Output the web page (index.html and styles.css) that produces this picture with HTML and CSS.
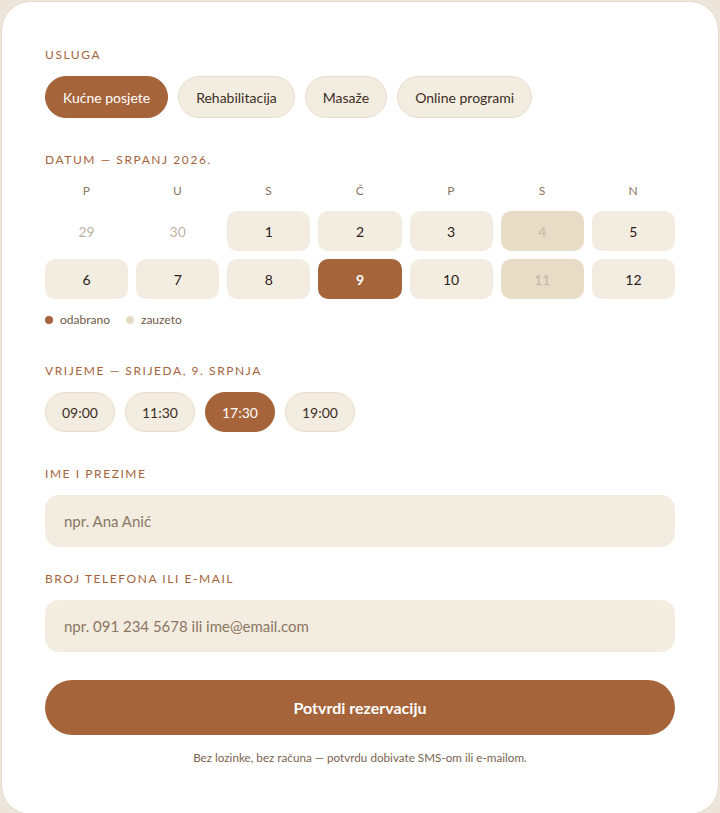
FILE: index.html
```html
<!DOCTYPE html>
<html lang="hr">
<head>
    <meta charset="UTF-8">
    <meta name="viewport" content="width=device-width, initial-scale=1.0">
    <title>Rezervacija termina</title>
    <link rel="stylesheet" href="styles.css">
</head>
<body>
    <div class="card">
        <div class="section">
            <p class="label">Usluga</p>
            <div class="chips">
                <button class="chip active">Kućne posjete</button>
                <button class="chip">Rehabilitacija</button>
                <button class="chip">Masaže</button>
                <button class="chip">Online programi</button>
            </div>
        </div>

        <div class="section">
            <p class="label">Datum — srpanj 2026.</p>
            <div class="weekdays">
                <span>P</span><span>U</span><span>S</span><span>Č</span><span>P</span><span>S</span><span>N</span>
            </div>
            <div class="calendar">
                <span class="day muted">29</span>
                <span class="day muted">30</span>
                <button class="day">1</button>
                <button class="day">2</button>
                <button class="day">3</button>
                <button class="day taken">4</button>
                <button class="day">5</button>
                <button class="day">6</button>
                <button class="day">7</button>
                <button class="day">8</button>
                <button class="day selected">9</button>
                <button class="day">10</button>
                <button class="day taken">11</button>
                <button class="day">12</button>
            </div>
            <div class="legend">
                <span><i class="dot dot-selected"></i>odabrano</span>
                <span><i class="dot dot-taken"></i>zauzeto</span>
            </div>
        </div>

        <div class="section times">
            <p class="label">Vrijeme — srijeda, 9. srpnja</p>
            <div class="chips">
                <button class="chip time">09:00</button>
                <button class="chip time">11:30</button>
                <button class="chip time active">17:30</button>
                <button class="chip time">19:00</button>
            </div>
        </div>

        <div class="section">
            <p class="label">Ime i prezime</p>
            <input type="text" class="field" placeholder="npr. Ana Anić">
        </div>

        <div class="section tight">
            <p class="label">Broj telefona ili e-mail</p>
            <input type="text" class="field" placeholder="npr. 091 234 5678 ili ime@email.com">
        </div>

        <button class="submit">Potvrdi rezervaciju</button>
        <p class="note">Bez lozinke, bez računa — potvrdu dobivate SMS-om ili e-mailom.</p>
    </div>
</body>
</html>
```

FILE: styles.css
```css
* {
    box-sizing: border-box;
}
body {
    margin: 0;
    padding: 1px;
    background-color: #ede5d8;
    font-family: Lato, "Open Sans", sans-serif;
    color: #2b2118;
}
.card {
    background-color: #fff;
    border: 1px solid #e6dccb;
    border-radius: 30px;
    padding: 46px 43px 50px;
    min-height: 811px;
}
.label {
    margin: 0 0 14px;
    font-size: 12px;
    line-height: 14px;
    letter-spacing: 0.13em;
    text-transform: uppercase;
    color: #a5633b;
}
.section + .section {
    margin-top: 35px;
}
.section.times {
    margin-top: 37px;
}
.section.tight {
    margin-top: 25px;
}
.chips {
    display: flex;
    gap: 10px;
}
button {
    font-family: inherit;
    cursor: pointer;
}
.chip {
    height: 42px;
    padding: 0 17px;
    font-size: 14px;
    color: #3d2f24;
    background-color: #f3ece1;
    border: 1px solid #e8dece;
    border-radius: 999px;
}
.chip.time {
    height: 40px;
    padding: 0 16px;
}
.chip.active {
    background-color: #a6643a;
    border-color: #a6643a;
    color: #fff;
}
.weekdays {
    display: grid;
    grid-template-columns: repeat(7, 1fr);
    gap: 8px;
    margin-top: 3px;
    font-size: 12px;
    line-height: 20px;
    letter-spacing: 0.05em;
    color: #8b7661;
    text-align: center;
}
.calendar {
    display: grid;
    grid-template-columns: repeat(7, 1fr);
    gap: 8px;
    margin-top: 10px;
}
.day {
    height: 40px;
    display: flex;
    align-items: center;
    justify-content: center;
    font-size: 14px;
    color: #2b2118;
    background-color: #f3ece1;
    border: none;
    border-radius: 10px;
}
.day.muted {
    background: none;
    color: #bdb2a3;
}
.day.taken {
    background-color: #e9dcc7;
    color: #c3b7a6;
}
.day.selected {
    background-color: #a6643a;
    color: #fff;
    font-weight: 700;
}
.legend {
    display: flex;
    gap: 16px;
    margin-top: 14px;
    font-size: 12px;
    line-height: 14px;
    color: #6f5a48;
}
.legend span {
    display: flex;
    align-items: center;
    gap: 7px;
}
.dot {
    width: 8px;
    height: 8px;
    border-radius: 50%;
}
.dot-selected {
    background-color: #a6643a;
}
.dot-taken {
    background-color: #e6dcc6;
}
.field {
    display: block;
    width: 100%;
    height: 52px;
    padding: 0 19px;
    font-family: inherit;
    font-size: 15px;
    color: #2b2118;
    background-color: #f3ece1;
    border: none;
    border-radius: 14px;
    outline: none;
}
.field::placeholder {
    color: #8b7661;
}
.submit {
    display: block;
    width: 100%;
    height: 55px;
    margin-top: 28px;
    font-size: 16px;
    font-weight: 700;
    color: #fff;
    background-color: #a6643a;
    border: none;
    border-radius: 999px;
}
.note {
    margin: 15px 0 0;
    font-size: 11.7px;
    line-height: 14px;
    text-align: center;
    color: #7a6450;
}
```
